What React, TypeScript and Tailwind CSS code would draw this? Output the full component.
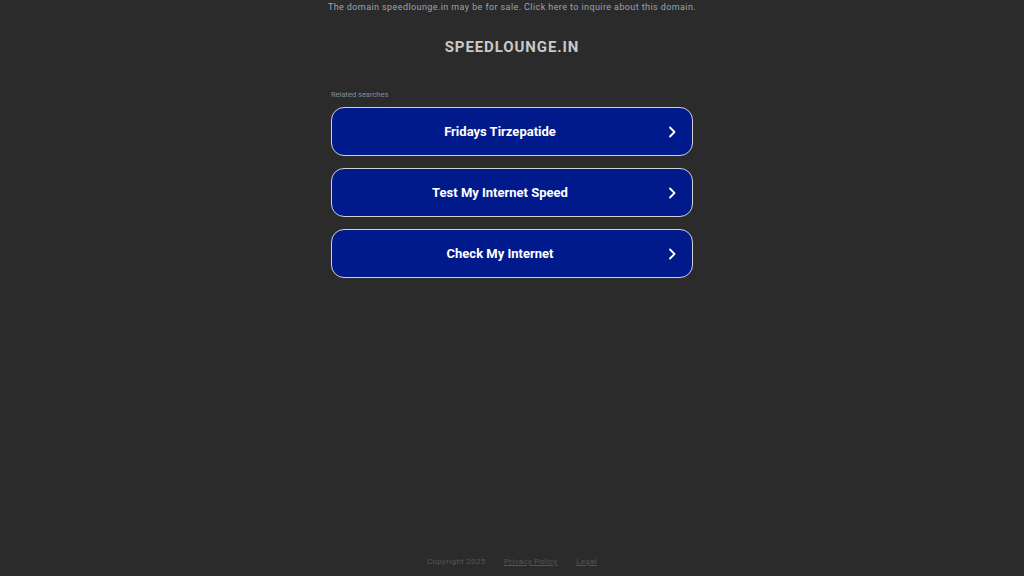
const items = ["Fridays Tirzepatide", "Test My Internet Speed", "Check My Internet"];

function Chevron() {
  return (
    <svg width="8" height="12" viewBox="0 0 8 12" fill="none" className="shrink-0">
      <path d="M2 1.5 L6.5 6 L2 10.5" stroke="white" strokeWidth="1.8" strokeLinecap="round" strokeLinejoin="round" />
    </svg>
  );
}

export default function App() {
  return (
    <div
      className="flex h-[576px] w-full flex-col items-center bg-[#2b2b2b]"
      style={{ fontFamily: "Roboto, 'Liberation Sans', sans-serif" }}
    >
      <p className="mt-[1px] text-[9px] leading-[12px] tracking-[0.045em] text-[#9aa5b1]">
        The domain speedlounge.in may be for sale. Click here to inquire about this domain.
      </p>

      <h1 className="mt-[25px] text-[15px] font-bold leading-[18px] tracking-[0.06em] text-[#c9c9c9]">
        SPEEDLOUNGE.IN
      </h1>

      <div className="mt-[35px] w-[362px]">
        <p className="text-[7.5px] leading-[8px] text-[#8c8c8c]">Related searches</p>
        <div className="mt-[8px] flex flex-col gap-[12px]">
          {items.map((t) => (
            <a
              key={t}
              href="#"
              className="flex h-[49px] items-center rounded-[13px] border-[1.5px] border-[#d2d2d2] bg-[#001a8c] pr-[16px]"
            >
              <span className="flex-1 text-center text-[13px] font-bold text-white">{t}</span>
              <Chevron />
            </a>
          ))}
        </div>
      </div>

      <div className="mt-auto mb-[9px] flex items-center gap-[8px] text-[8px] leading-[10px] tracking-[0.04em] text-[#555555]">
        <span>Copyright 2025</span>
        <span>·</span>
        <a href="#" className="underline">Privacy Policy</a>
        <span>·</span>
        <a href="#" className="underline">Legal</a>
      </div>
    </div>
  );
}
